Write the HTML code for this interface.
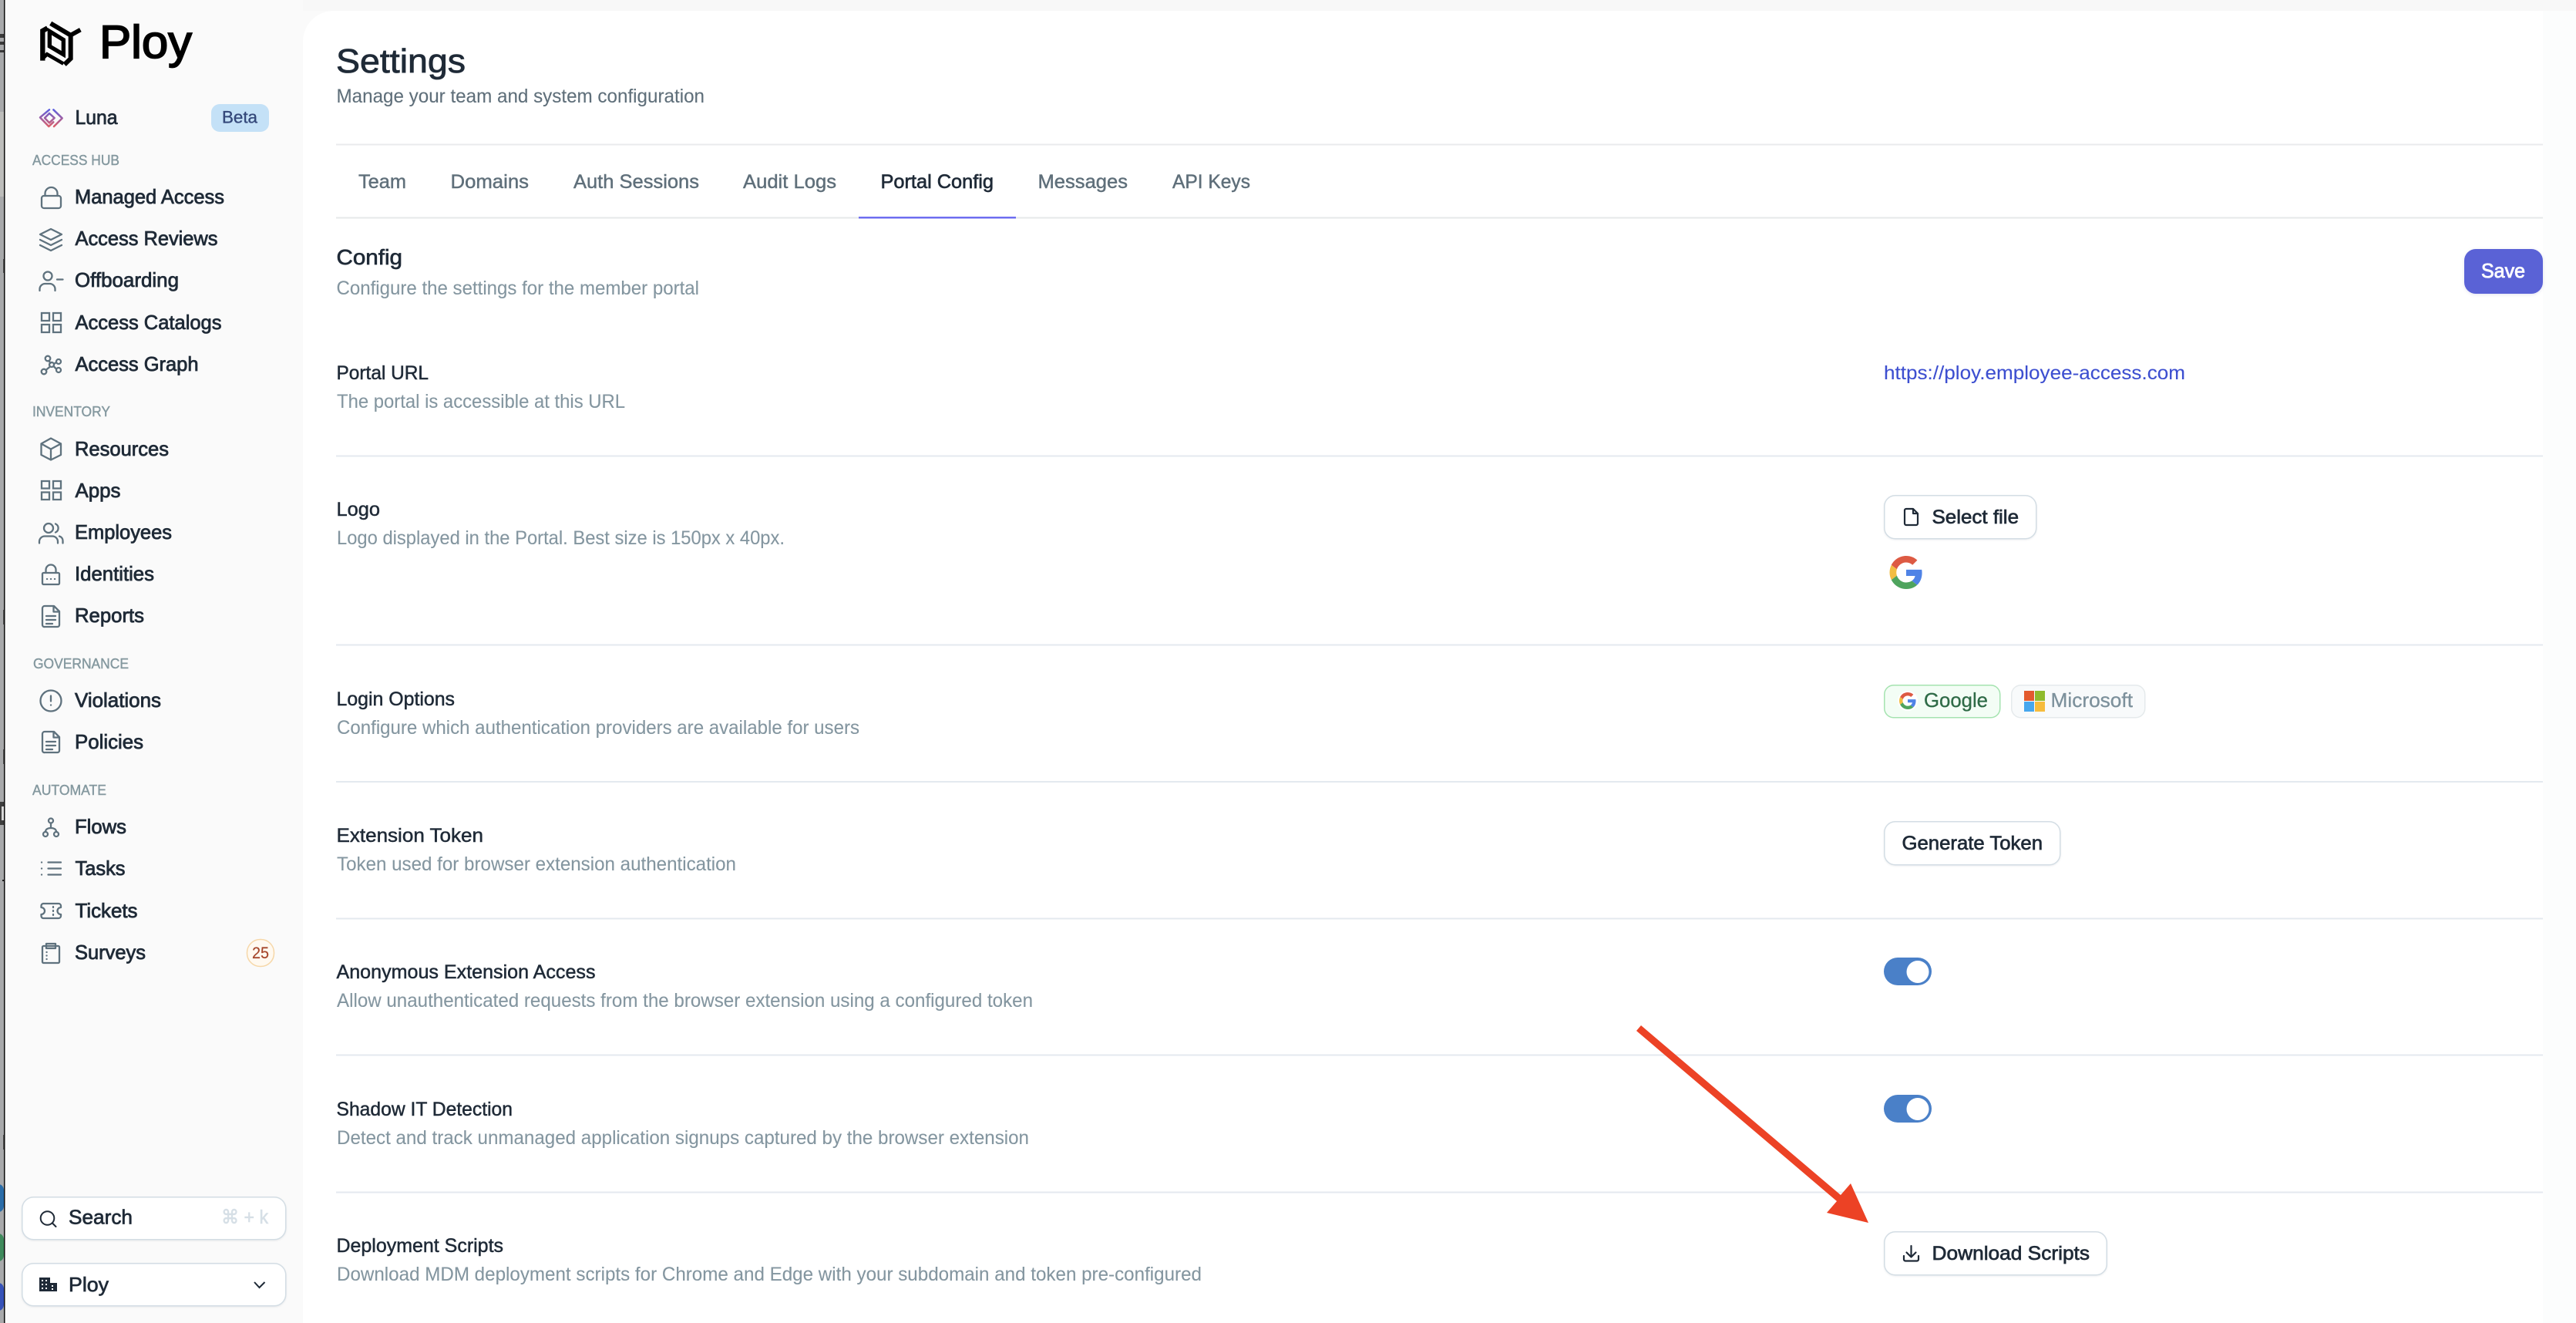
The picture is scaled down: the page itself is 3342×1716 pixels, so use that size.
<!DOCTYPE html>
<html lang="en">
<head>
<meta charset="utf-8">
<title>Ploy Settings</title>
<style>
html,body{margin:0;padding:0;width:3342px;height:1716px;overflow:hidden;background:#fff}
svg{display:block}
text{font-family:"Liberation Sans","DejaVu Sans",sans-serif;white-space:pre}
.n{font-size:26px;fill:#1f2a37;stroke:#1f2a37;stroke-width:.8}
.h{font-size:18px;fill:#84989f;stroke:#84989f;stroke-width:.4}
.l{font-size:25px;fill:#1f2a37;stroke:#1f2a37;stroke-width:.5}
.s{font-size:25px;fill:#8496a0;stroke:#8496a0;stroke-width:.12}
.t{font-size:25px;fill:#5f6f7a;stroke:#5f6f7a;stroke-width:.45}
.b{font-size:25px;fill:#1f2a37;stroke:#1f2a37;stroke-width:.7}
.i{fill:none;stroke:#5f727e;stroke-width:2.3;stroke-linecap:round;stroke-linejoin:round}
.btn{fill:#fff;stroke:#d3dde4;stroke-width:1.5;filter:drop-shadow(0 1px 1px rgba(20,40,60,.08))}
.ln{stroke:#e4e9ef;stroke-width:2}
</style>
</head>
<body>
<svg width="3342" height="1716" viewBox="0 0 3342 1716" xmlns="http://www.w3.org/2000/svg">
<defs>
<linearGradient id="lg" gradientUnits="userSpaceOnUse" x1="0" y1="50" x2="0" y2="118">
<stop offset="0" stop-color="#5a5fe2"/><stop offset="1" stop-color="#dc5f69"/>
</linearGradient>
<symbol id="g" viewBox="0 0 48 48">
<path fill="#dd5a43" d="M24 9.5c3.54 0 6.71 1.22 9.21 3.6l6.85-6.85C35.9 2.38 30.47 0 24 0 14.62 0 6.51 5.38 2.56 13.22l7.98 6.19C12.43 13.72 17.74 9.5 24 9.5z"/>
<path fill="#4f83e6" d="M46.98 24.55c0-1.57-.15-3.09-.38-4.55H24v9.02h12.94c-.58 2.96-2.26 5.48-4.78 7.18l7.73 6c4.51-4.18 7.09-10.36 7.09-17.65z"/>
<path fill="#f2bd42" d="M10.53 28.59c-.48-1.45-.76-2.99-.76-4.59s.27-3.14.76-4.59l-7.98-6.19C.92 16.46 0 20.12 0 24c0 3.88.92 7.54 2.56 10.78l7.97-6.19z"/>
<path fill="#4fa45e" d="M24 48c6.48 0 11.93-2.13 15.89-5.81l-7.73-6c-2.15 1.45-4.92 2.3-8.16 2.3-6.26 0-11.57-4.22-13.47-9.91l-7.98 6.19C6.51 42.62 14.62 48 24 48z"/>
</symbol>
</defs>

<!-- window strip -->
<rect x="0" y="0" width="5" height="1716" fill="#a8a9ab"/>
<rect x="0" y="145" width="5" height="110" fill="#bdbdbb"/>
<rect x="0" y="44" width="5" height="5" fill="#3a3a3a"/>
<rect x="0" y="54" width="5" height="4" fill="#3a3a3a"/>
<rect x="0" y="65" width="5" height="3" fill="#3a3a3a"/>
<rect x="4" y="336" width="1" height="18" fill="#555"/>
<rect x="4" y="791" width="1" height="19" fill="#555"/>
<rect x="4" y="972" width="1" height="19" fill="#555"/>
<rect x="0" y="1040" width="5" height="30" fill="#3e3e3e"/>
<rect x="2" y="1046" width="3" height="18" fill="#d8d8d8"/>
<rect x="3" y="1141" width="2" height="2" fill="#222"/>
<rect x="4" y="1472" width="1" height="19" fill="#555"/>
<rect x="-8" y="1536" width="13" height="36" rx="8" fill="#2a6ca8"/>
<rect x="-8" y="1600" width="13" height="36" rx="8" fill="#3f8a5c"/>
<rect x="-8" y="1664" width="13" height="36" rx="8" fill="#3652b8"/>
<rect x="5" y="0" width="1.5" height="1716" fill="#0c0c0c"/>

<!-- backgrounds -->
<rect x="6.5" y="0" width="3336" height="1716" fill="#fafafa"/>
<rect x="393" y="0" width="2949" height="14" fill="#f8f8f8"/>
<path d="M433 14H3342V1716H393V54A40 40 0 0 1 433 14Z" fill="#ffffff"/>
<rect x="3299" y="14" width="43" height="1702" fill="#fcfdfd"/>

<!-- logo -->
<g transform="translate(45 20) scale(.3333)" fill="none" stroke="#000" stroke-linejoin="miter">
<path d="M31 176V60L50 49" stroke-width="19"/>
<path d="M62 31L140 77V168L116 191" stroke-width="18"/>
<path d="M140 77L178 56" stroke-width="17"/>
<path d="M58 62V120L112 152V95Z" stroke-width="16"/>
<path d="M31 168L48 151L112 188" stroke-width="14"/>
</g>
<text x="129" y="75" font-size="60" fill="#000" stroke="#000" stroke-width="1.8" textLength="120" lengthAdjust="spacingAndGlyphs">Ploy</text>

<!-- luna -->
<g transform="translate(40 125) scale(.3333)" fill="none" stroke="url(#lg)" stroke-width="7.500" stroke-linejoin="round" stroke-linecap="round">
<path d="M72 52L36 82L70 117L88 100"/>
<path d="M92 84L72 66L54 84L72 103Z"/>
<path d="M88 52L122 85L90 117"/>
</g>
<text class="n" x="97.500" y="161" textLength="55" lengthAdjust="spacingAndGlyphs">Luna</text>
<rect x="274" y="135" width="75" height="36" rx="11" fill="#c4e1f7"/>
<text x="288" y="159.500" font-size="22" fill="#34487a" stroke="#34487a" stroke-width=".35" textLength="46" lengthAdjust="spacingAndGlyphs">Beta</text>

<!-- sidebar labels -->
<text class="h" x="42" y="214" textLength="113" lengthAdjust="spacingAndGlyphs">ACCESS HUB</text>
<text class="n" x="97" y="264" textLength="194" lengthAdjust="spacingAndGlyphs">Managed Access</text>
<text class="n" x="97.500" y="318" textLength="185" lengthAdjust="spacingAndGlyphs">Access Reviews</text>
<text class="n" x="97" y="372" textLength="135" lengthAdjust="spacingAndGlyphs">Offboarding</text>
<text class="n" x="97.500" y="427" textLength="190" lengthAdjust="spacingAndGlyphs">Access Catalogs</text>
<text class="n" x="97.500" y="481" textLength="160" lengthAdjust="spacingAndGlyphs">Access Graph</text>
<text class="h" x="42" y="540" textLength="101" lengthAdjust="spacingAndGlyphs">INVENTORY</text>
<text class="n" x="97" y="591" textLength="122" lengthAdjust="spacingAndGlyphs">Resources</text>
<text class="n" x="97.500" y="645" textLength="59" lengthAdjust="spacingAndGlyphs">Apps</text>
<text class="n" x="97" y="699" textLength="126" lengthAdjust="spacingAndGlyphs">Employees</text>
<text class="n" x="97" y="753" textLength="103" lengthAdjust="spacingAndGlyphs">Identities</text>
<text class="n" x="97" y="807" textLength="90" lengthAdjust="spacingAndGlyphs">Reports</text>
<text class="h" x="43" y="867" textLength="124" lengthAdjust="spacingAndGlyphs">GOVERNANCE</text>
<text class="n" x="97" y="917" textLength="112" lengthAdjust="spacingAndGlyphs">Violations</text>
<text class="n" x="97" y="971" textLength="89" lengthAdjust="spacingAndGlyphs">Policies</text>
<text class="h" x="42" y="1031" textLength="96" lengthAdjust="spacingAndGlyphs">AUTOMATE</text>
<text class="n" x="97" y="1081" textLength="67" lengthAdjust="spacingAndGlyphs">Flows</text>
<text class="n" x="97.500" y="1135" textLength="65" lengthAdjust="spacingAndGlyphs">Tasks</text>
<text class="n" x="97.500" y="1190" textLength="81" lengthAdjust="spacingAndGlyphs">Tickets</text>
<text class="n" x="97" y="1244" textLength="92" lengthAdjust="spacingAndGlyphs">Surveys</text>
<rect x="320.500" y="1218.500" width="35" height="35" rx="17" fill="#fff9f0" stroke="#f6d7a8" stroke-width="1.500"/>
<text x="327" y="1243" font-size="21" fill="#a5462a" stroke="#a5462a" stroke-width=".15" textLength="22" lengthAdjust="spacingAndGlyphs">25</text>

<!-- sidebar icons -->
<g class="i">
<rect x="54" y="254" width="25" height="16" rx="3"/><path d="M58.500 254V251a8 8 0 0 1 16 0V254"/>
<path d="M66 297L80 304L66 311L52 304Z"/><path d="M52 311L66 318L80 311"/><path d="M52 318L66 325L80 318"/>
<circle cx="62" cy="358" r="5.500"/><path d="M51.500 377v-2a7 7 0 0 1 7-7h6a7 7 0 0 1 7 7v2"/><path d="M74 362.500H81.500"/>
<path d="M54 406h10v10h-10zM69 406h10v10h-10zM54 421h10v10h-10zM69 421h10v10h-10z" stroke-linejoin="miter"/>
<circle cx="62" cy="465" r="3.300"/><circle cx="67" cy="473" r="3"/><circle cx="57" cy="482" r="3.300"/><circle cx="76" cy="469" r="3"/><circle cx="76" cy="480" r="3"/><path d="M63.500 468L65.500 471M65 475.500L59.500 480M70 472L73 470M69.500 475L73 478.500"/>
<path d="M66 568.500L79 575.500V590L66 596.500L53.500 590V575.500ZM53.500 575.500L66 582.500L79 575.500M66 582.500V596.500"/>
<path d="M54 624h10v9.500h-10zM69 624h10v9.500h-10zM54 638.500h10v9.500h-10zM69 638.500h10v9.500h-10z" stroke-linejoin="miter"/>
<circle cx="63" cy="685" r="6"/><path d="M51 704.500v-2a7 7 0 0 1 7-7h10a7 7 0 0 1 7 7v2"/><path d="M72 679.500a6 6 0 0 1 0 11M77 695.500a6 6 0 0 1 4.500 6v3"/>
<rect x="55" y="743" width="22" height="15" rx="1.500"/><path d="M59.500 743V739a6.500 6.500 0 0 1 13 0V743"/><path d="M61 751h.1M66 751h.1M71 751h.1"/>
<path d="M58 786H70L77 793V810.500A2.500 2.500 0 0 1 74.500 813H58A2.500 2.500 0 0 1 55 810.500V789A3 3 0 0 1 58 786ZM69.500 786V793.500H77M60 799H72M60 804H72M60 809H68"/>
<circle cx="66" cy="909" r="13.500"/><path d="M66 902.500V909.500M66 914.500h.1"/>
<path d="M58 949H70L77 956V973.500A2.500 2.500 0 0 1 74.500 976H58A2.500 2.500 0 0 1 55 973.500V952A3 3 0 0 1 58 949ZM69.500 949V956.500H77M60 962H72M60 967H72M60 972H68"/>
<circle cx="66" cy="1064.500" r="3"/><circle cx="59" cy="1082" r="3"/><circle cx="73" cy="1082" r="3"/><path d="M66 1068V1074M59 1079C59 1075 63 1074 66 1074C69 1074 73 1075 73 1079"/>
<path d="M62.500 1118.500H79M62.500 1126.500H79M62.500 1134.500H79"/><path d="M54 1118.500h.1M54 1126.500h.1M54 1134.500h.1"/>
<path d="M56 1172H76A3 3 0 0 1 79 1175V1177A4.500 4.500 0 0 0 79 1186V1188A3 3 0 0 1 76 1191H56A3 3 0 0 1 53.500 1188V1186A4.500 4.500 0 0 0 53.500 1177V1175A3 3 0 0 1 56 1172ZM69 1176v1M69 1181v1M69 1186v1"/>
<rect x="55" y="1227" width="22" height="22" rx="1.500"/><path d="M60 1224H72V1230H60ZM60.500 1235h.1M60.500 1239.500h.1M60.500 1244h.1"/>
</g>

<!-- search / org -->
<rect class="btn" x="28.750" y="1552.750" width="342" height="55" rx="15"/>
<circle cx="61.500" cy="1580" r="8.800" fill="none" stroke="#1f2a37" stroke-width="2"/>
<path d="M68 1586.500L72.500 1591" stroke="#1f2a37" stroke-width="2" stroke-linecap="round"/>
<text class="b" x="89" y="1587.500" style="font-size:26px" textLength="83" lengthAdjust="spacingAndGlyphs">Search</text>
<text x="287" y="1587" font-size="25" fill="#d6dfe6" stroke="#d6dfe6" stroke-width=".6" textLength="61" lengthAdjust="spacingAndGlyphs">⌘ + k</text>
<rect class="btn" x="28.750" y="1638.750" width="342" height="55" rx="15"/>
<path d="M51 1657H65V1664H74V1675H51Z" fill="#1f2a37"/>
<path d="M54 1660h2v2h-2zM59 1660h2v2h-2zM54 1665h2v2h-2zM59 1665h2v2h-2zM54 1670h2v2h-2zM59 1670h2v2h-2zM67 1667h2v2h-2zM67 1671h2v2h-2z" fill="#fff"/>
<text class="b" x="89" y="1675" style="font-size:26px" textLength="52" lengthAdjust="spacingAndGlyphs">Ploy</text>
<path d="M330 1663L336.500 1670L343.500 1663" fill="none" stroke="#1f2a37" stroke-width="2"/>

<!-- header -->
<text x="436" y="94" font-size="44" fill="#1f2a37" stroke="#1f2a37" stroke-width=".8" textLength="168" lengthAdjust="spacingAndGlyphs">Settings</text>
<text x="436.500" y="133" font-size="25" fill="#5f6f7a" stroke="#5f6f7a" stroke-width=".12" textLength="477.500" lengthAdjust="spacingAndGlyphs">Manage your team and system configuration</text>
<line x1="436" y1="187.500" x2="3299" y2="187.500" stroke="#e9ebed" stroke-width="2"/>

<!-- tabs -->
<text class="t" x="465" y="244" textLength="62" lengthAdjust="spacingAndGlyphs">Team</text>
<text class="t" x="584.500" y="244" textLength="101.500" lengthAdjust="spacingAndGlyphs">Domains</text>
<text class="t" x="744" y="244" textLength="163" lengthAdjust="spacingAndGlyphs">Auth Sessions</text>
<text class="t" x="964" y="244" textLength="121" lengthAdjust="spacingAndGlyphs">Audit Logs</text>
<text class="t" x="1142.500" y="244" style="fill:#1f2a37;stroke:#1f2a37;stroke-width:.65" textLength="146.500" lengthAdjust="spacingAndGlyphs">Portal Config</text>
<text class="t" x="1346.500" y="244" textLength="116.500" lengthAdjust="spacingAndGlyphs">Messages</text>
<text class="t" x="1521" y="244" textLength="101" lengthAdjust="spacingAndGlyphs">API Keys</text>
<line x1="436" y1="282.500" x2="3299" y2="282.500" stroke="#e6e8ea" stroke-width="2"/>
<rect x="1114" y="281" width="204" height="2.500" fill="#6e6ef0"/>

<!-- config head -->
<text x="436.500" y="343" font-size="28" fill="#1f2a37" stroke="#1f2a37" stroke-width=".7" textLength="85.500" lengthAdjust="spacingAndGlyphs">Config</text>
<text class="s" x="436.500" y="382" textLength="470.500" lengthAdjust="spacingAndGlyphs">Configure the settings for the member portal</text>
<rect x="3197" y="323" width="102" height="58" rx="15" fill="#5a62d6" style="filter:drop-shadow(0 1px 2px rgba(60,60,150,.15))"/>
<text x="3219" y="360" font-size="26" fill="#fff" stroke="#fff" stroke-width=".8" textLength="57" lengthAdjust="spacingAndGlyphs">Save</text>

<!-- rows -->
<text class="l" x="436.500" y="492" textLength="119.500" lengthAdjust="spacingAndGlyphs">Portal URL</text>
<text class="s" x="437" y="529" textLength="374" lengthAdjust="spacingAndGlyphs">The portal is accessible at this URL</text>
<text x="2444" y="492" font-size="25" fill="#3d4fd0" stroke="#3d4fd0" stroke-width=".12" textLength="391" lengthAdjust="spacingAndGlyphs">https://ploy.employee-access.com</text>
<line class="ln" x1="436" y1="591.500" x2="3299" y2="591.500"/>

<text class="l" x="436.500" y="669" textLength="56.500" lengthAdjust="spacingAndGlyphs">Logo</text>
<text class="s" x="437" y="706" textLength="581" lengthAdjust="spacingAndGlyphs">Logo displayed in the Portal. Best size is 150px x 40px.</text>
<rect class="btn" x="2444.750" y="642.750" width="197" height="56" rx="14"/>
<path d="M2473 660H2482L2488 666V679A2 2 0 0 1 2486 681H2473A2 2 0 0 1 2471 679V662A2 2 0 0 1 2473 660ZM2482 660V666H2488" fill="none" stroke="#1f2a37" stroke-width="2.200" stroke-linejoin="round"/>
<text class="b" x="2506.500" y="679" textLength="112.500" lengthAdjust="spacingAndGlyphs">Select file</text>
<use href="#g" x="2451" y="721" width="44" height="43"/>
<line class="ln" x1="436" y1="836.500" x2="3299" y2="836.500"/>

<text class="l" x="436.500" y="915" textLength="153.500" lengthAdjust="spacingAndGlyphs">Login Options</text>
<text class="s" x="437" y="952" textLength="678" lengthAdjust="spacingAndGlyphs">Configure which authentication providers are available for users</text>
<rect x="2444.750" y="888.750" width="150" height="42" rx="12" fill="#f3fdf5" stroke="#a5e3b0" stroke-width="1.500"/>
<circle cx="2475" cy="909" r="13" fill="#fff"/>
<use href="#g" x="2464" y="898" width="22" height="22"/>
<text x="2496" y="917" font-size="26" fill="#2f6b47" stroke="#2f6b47" stroke-width=".3" textLength="83" lengthAdjust="spacingAndGlyphs">Google</text>
<rect x="2609.750" y="888.750" width="173" height="42" rx="12" fill="#f8fafb" stroke="#e5eaec" stroke-width="1.500"/>
<rect x="2626" y="896" width="13" height="13" fill="#e35a2e"/>
<rect x="2640" y="896" width="13" height="13" fill="#8fbb2c"/>
<rect x="2626" y="910" width="13" height="13" fill="#47a7ee"/>
<rect x="2640" y="910" width="13" height="13" fill="#f6bc3c"/>
<text x="2660.500" y="917" font-size="26" fill="#7d919c" stroke="#7d919c" stroke-width=".3" textLength="106.500" lengthAdjust="spacingAndGlyphs">Microsoft</text>
<line class="ln" x1="436" y1="1014" x2="3299" y2="1014"/>

<text class="l" x="436.500" y="1092" textLength="190.500" lengthAdjust="spacingAndGlyphs">Extension Token</text>
<text class="s" x="437" y="1129" textLength="518" lengthAdjust="spacingAndGlyphs">Token used for browser extension authentication</text>
<rect class="btn" x="2444.750" y="1065.750" width="228" height="56" rx="14"/>
<text class="b" x="2467.500" y="1102" textLength="182.500" lengthAdjust="spacingAndGlyphs">Generate Token</text>
<line class="ln" x1="436" y1="1191.500" x2="3299" y2="1191.500"/>

<text class="l" x="436.500" y="1269" textLength="336" lengthAdjust="spacingAndGlyphs">Anonymous Extension Access</text>
<text class="s" x="437" y="1306" textLength="903" lengthAdjust="spacingAndGlyphs">Allow unauthenticated requests from the browser extension using a configured token</text>
<rect x="2444" y="1242" width="62" height="36" rx="18" fill="#4a80c8"/>
<circle cx="2488" cy="1260.500" r="14.500" fill="#fff"/>
<line class="ln" x1="436" y1="1368.500" x2="3299" y2="1368.500"/>

<text class="l" x="436.500" y="1447" textLength="228.500" lengthAdjust="spacingAndGlyphs">Shadow IT Detection</text>
<text class="s" x="437" y="1484" textLength="898" lengthAdjust="spacingAndGlyphs">Detect and track unmanaged application signups captured by the browser extension</text>
<rect x="2444" y="1420" width="62" height="36" rx="18" fill="#4a80c8"/>
<circle cx="2488" cy="1438.500" r="14.500" fill="#fff"/>
<line class="ln" x1="436" y1="1546.500" x2="3299" y2="1546.500"/>

<text class="l" x="436.500" y="1624" textLength="216.500" lengthAdjust="spacingAndGlyphs">Deployment Scripts</text>
<text class="s" x="437" y="1661" textLength="1122" lengthAdjust="spacingAndGlyphs">Download MDM deployment scripts for Chrome and Edge with your subdomain and token pre-configured</text>
<rect class="btn" x="2444.750" y="1597.750" width="288.500" height="56" rx="14"/>
<path d="M2479.500 1616V1630M2473.500 1624.500L2479.500 1630.500L2485.500 1624.500M2470 1629V1633.500A2 2 0 0 0 2472 1635.500H2487A2 2 0 0 0 2489 1633.500V1629" fill="none" stroke="#1f2a37" stroke-width="2.200" stroke-linejoin="round" stroke-linecap="round"/>
<text class="b" x="2506.500" y="1634" textLength="204.500" lengthAdjust="spacingAndGlyphs">Download Scripts</text>

<!-- arrow -->
<polygon points="2129,1330 2123,1337 2383,1558 2370,1573 2424,1586 2401,1535 2388,1550" fill="#ec4225"/>
</svg>
</body>
</html>
